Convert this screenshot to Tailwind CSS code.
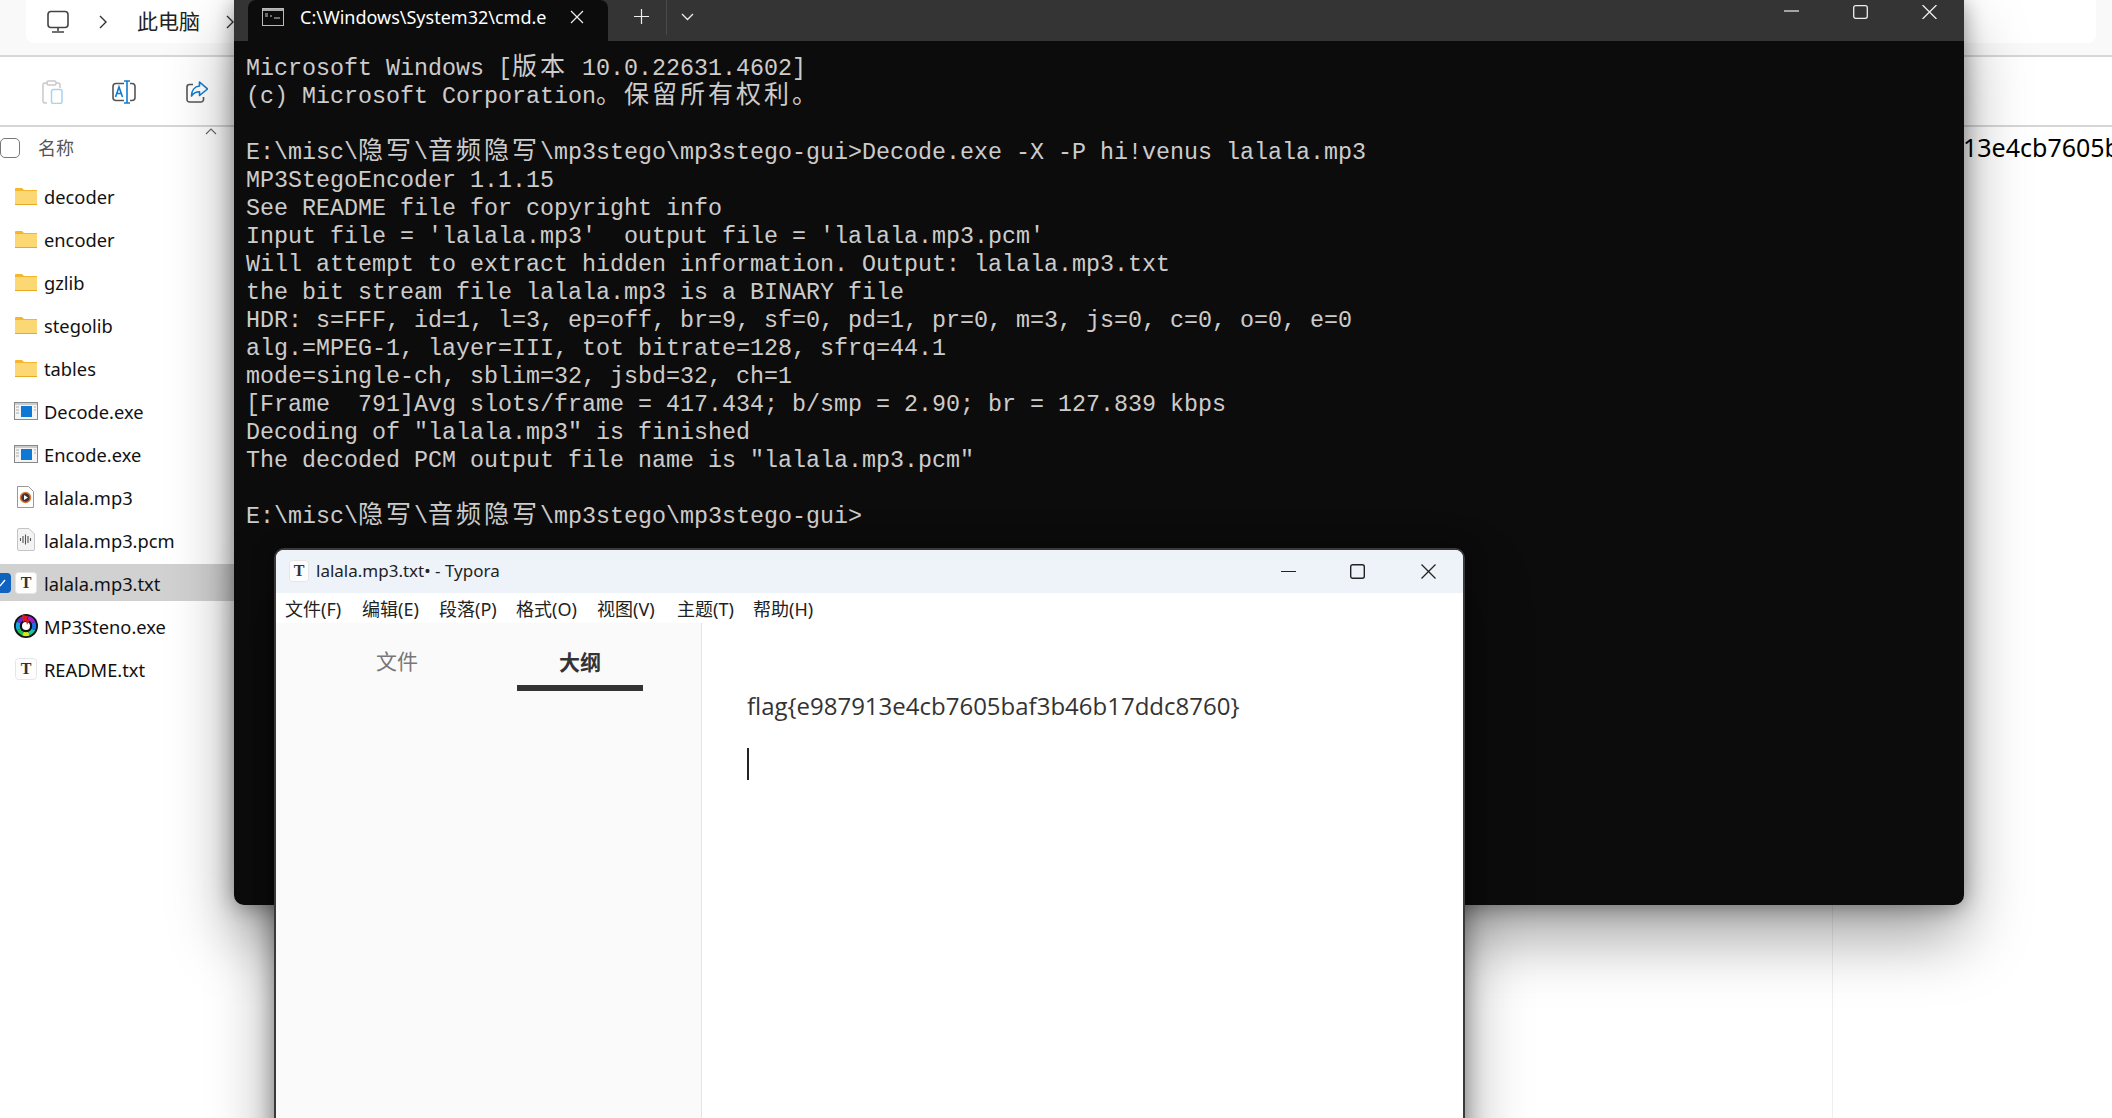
<!DOCTYPE html>
<html lang="zh">
<head>
<meta charset="utf-8">
<script src="https://cdn.jsdelivr.net/npm/@tailwindcss/browser@4"></script>
</head>
<body class="m-0">
<div class="relative w-[2112px] h-[1118px] overflow-hidden bg-white font-['Noto_Sans','Noto_Sans_CJK_SC',sans-serif] text-[#111]">

  <!-- Explorer behind -->
  <div class="flex flex-col w-full h-full">
    <div class="h-[55px] bg-[#f9f9f9]">
      <div class="ml-[26px] w-[2070px] h-[43px] bg-white rounded-b-[8px] flex items-center">
        <svg class="ml-[20px] w-[24px] h-[24px]" viewBox="0 0 24 24" fill="none" stroke="#444" stroke-width="1.6"><rect x="2" y="1.500" width="20" height="16" rx="3"/><path d="M12 18v3M6 22h12"/></svg>
        <svg class="ml-[27px] w-[12px] h-[16px]" viewBox="0 0 12 16" fill="none" stroke="#333" stroke-width="1.4"><path d="M3 2l6 6-6 6"/></svg>
        <span class="ml-[28px] text-[21px] text-[#222]">此电脑</span>
        <svg class="ml-[24px] w-[12px] h-[16px]" viewBox="0 0 12 16" fill="none" stroke="#333" stroke-width="1.4"><path d="M3 2l6 6-6 6"/></svg>
      </div>
    </div>
    <div class="h-[2px] bg-[#d6d6d6]"></div>
    <div class="h-[68px] flex items-center pt-[2px]">
      <svg class="ml-[42px] w-[21px] h-[24px]" viewBox="0 0 21 24" fill="none" stroke-width="1.5"><path d="M14 3h2a2 2 0 0 1 2 2v3M5 23H3a2 2 0 0 1-2-2V5a2 2 0 0 1 2-2h2" stroke="#c9c9c9"/><rect x="5" y="1" width="9" height="4" rx="1.500" stroke="#c9c9c9"/><rect x="9.500" y="9.500" width="10.500" height="14" rx="2" stroke="#a9d2ee"/></svg>
      <svg class="ml-[49px] w-[24px] h-[24px]" viewBox="0 0 24 24" fill="none" stroke-width="1.6"><path d="M12 3.500H4a3 3 0 0 0-3 3v11a3 3 0 0 0 3 3h8M18 3.500h2a3 3 0 0 1 3 3v11a3 3 0 0 1-3 3h-2" stroke="#555"/><path d="M12 1h6M12 23h6M15 1v22" stroke="#0f7ccf"/><path d="M3.500 17l3.500-10 3.500 10M4.800 13.500h4.500" stroke="#0f7ccf"/></svg>
      <svg class="ml-[50px] w-[22px] h-[22px]" viewBox="0 0 22 22" fill="none" stroke-width="1.6"><path d="M7 3.500H3.500a2.500 2.500 0 0 0-2.500 2.500v12.500a2.500 2.500 0 0 0 2.500 2.500H15a2.500 2.500 0 0 0 2.500-2.500V16" stroke="#555"/><path d="M13.500 1l8 7-8 6.500v-3.800c-4 0-6 1-8 4.300 0-5.500 3-9.500 8-10z" stroke="#0f7ccf" stroke-linejoin="round"/></svg>
    </div>
    <div class="h-[2px] bg-[#d6d6d6]"></div>

    <div class="relative flex-1 flex">
      <div class="w-[234px] shrink-0">
        <div class="relative h-[50px]">
          <svg class="absolute left-[205px] top-[0px] w-[12px] h-[8px]" viewBox="0 0 12 8" fill="none" stroke="#666" stroke-width="1.100"><path d="M1 7l5-5 5 5"/></svg>
          <div class="flex items-center pt-[11px]">
            <div class="w-[20px] h-[20px] rounded-[5px] border border-[#777]"></div>
            <span class="ml-[18px] text-[18px] leading-[20px] text-[#555]">名称</span>
          </div>
        </div>
        <ul class="flex flex-col gap-[6px] text-[18.300px] leading-[37px]">
          <li class="h-[37px] flex items-center pl-[15px]"><svg class="w-[22px] h-[18px]" viewBox="0 0 22 18"><path d="M0 2a1 1 0 0 1 1-1h6l2 2h13v4H0z" fill="#f5b62c"/><path d="M0 4h22v13a1 1 0 0 1-1 1H1a1 1 0 0 1-1-1z" fill="#fcd875"/><path d="M0 17h22v1H0z" fill="#eaa824"/></svg><span class="ml-[7px] translate-y-[1px]">decoder</span></li>
          <li class="h-[37px] flex items-center pl-[15px]"><svg class="w-[22px] h-[18px]" viewBox="0 0 22 18"><path d="M0 2a1 1 0 0 1 1-1h6l2 2h13v4H0z" fill="#f5b62c"/><path d="M0 4h22v13a1 1 0 0 1-1 1H1a1 1 0 0 1-1-1z" fill="#fcd875"/><path d="M0 17h22v1H0z" fill="#eaa824"/></svg><span class="ml-[7px] translate-y-[1px]">encoder</span></li>
          <li class="h-[37px] flex items-center pl-[15px]"><svg class="w-[22px] h-[18px]" viewBox="0 0 22 18"><path d="M0 2a1 1 0 0 1 1-1h6l2 2h13v4H0z" fill="#f5b62c"/><path d="M0 4h22v13a1 1 0 0 1-1 1H1a1 1 0 0 1-1-1z" fill="#fcd875"/><path d="M0 17h22v1H0z" fill="#eaa824"/></svg><span class="ml-[7px] translate-y-[1px]">gzlib</span></li>
          <li class="h-[37px] flex items-center pl-[15px]"><svg class="w-[22px] h-[18px]" viewBox="0 0 22 18"><path d="M0 2a1 1 0 0 1 1-1h6l2 2h13v4H0z" fill="#f5b62c"/><path d="M0 4h22v13a1 1 0 0 1-1 1H1a1 1 0 0 1-1-1z" fill="#fcd875"/><path d="M0 17h22v1H0z" fill="#eaa824"/></svg><span class="ml-[7px] translate-y-[1px]">stegolib</span></li>
          <li class="h-[37px] flex items-center pl-[15px]"><svg class="w-[22px] h-[18px]" viewBox="0 0 22 18"><path d="M0 2a1 1 0 0 1 1-1h6l2 2h13v4H0z" fill="#f5b62c"/><path d="M0 4h22v13a1 1 0 0 1-1 1H1a1 1 0 0 1-1-1z" fill="#fcd875"/><path d="M0 17h22v1H0z" fill="#eaa824"/></svg><span class="ml-[7px] translate-y-[1px]">tables</span></li>
          <li class="h-[37px] flex items-center pl-[14px]"><svg class="w-[24px] h-[18px]" viewBox="0 0 24 18"><rect x=".5" y=".5" width="23" height="17" fill="#f4f4f4" stroke="#888"/><rect x="1" y="1" width="22" height="2" fill="#ccc"/><rect x="7" y="4" width="11" height="11" fill="#0f78d4"/><path d="M2 5h3M2 8h3M2 11h3M20 5h2M20 8h2" stroke="#aaa"/></svg><span class="ml-[6px] translate-y-[1px]">Decode.exe</span></li>
          <li class="h-[37px] flex items-center pl-[14px]"><svg class="w-[24px] h-[18px]" viewBox="0 0 24 18"><rect x=".5" y=".5" width="23" height="17" fill="#f4f4f4" stroke="#888"/><rect x="1" y="1" width="22" height="2" fill="#ccc"/><rect x="7" y="4" width="11" height="11" fill="#0f78d4"/><path d="M2 5h3M2 8h3M2 11h3M20 5h2M20 8h2" stroke="#aaa"/></svg><span class="ml-[6px] translate-y-[1px]">Encode.exe</span></li>
          <li class="h-[37px] flex items-center pl-[17px]"><svg class="w-[17px] h-[22px]" viewBox="0 0 17 22"><path d="M.5.500h11l5 5v16H.5z" fill="#fff" stroke="#999"/><circle cx="8.500" cy="11.500" r="5" fill="#3a3340"/><circle cx="8.500" cy="11.500" r="5" fill="none" stroke="#e07a2f" stroke-width="1.500"/><path d="M7 9l4 2.500L7 14z" fill="#fff"/></svg><span class="ml-[10px] translate-y-[1px]">lalala.mp3</span></li>
          <li class="h-[37px] flex items-center pl-[17px]"><svg class="w-[18px] h-[23px]" viewBox="0 0 18 23"><path d="M2 .500h10l5.500 5.500v15a1.500 1.500 0 0 1-1.500 1.500H2A1.500 1.500 0 0 1 .5 21V2A1.500 1.500 0 0 1 2 .5z" fill="#f3f3f3" stroke="#c4c4c4"/><path d="M3.500 10v3M6 8v7M8.500 6.500v10M11 8v7M13.500 10v3" stroke="#555" stroke-width="1.100"/></svg><span class="ml-[9px] translate-y-[1px]">lalala.mp3.pcm</span></li>
          <li class="relative h-[37px] flex items-center pl-[15px] bg-[#d1d1d1]">
            <div class="absolute left-0 top-[9px] w-[11px] h-[20px] rounded-r-[4px] bg-[#0f62c0]"><svg class="w-[11px] h-[20px]" viewBox="0 0 11 20" fill="none" stroke="#fff" stroke-width="1.300"><path d="M0 13l5-6"/></svg></div>
            <svg class="w-[22px] h-[22px]" viewBox="0 0 22 22"><rect x=".5" y=".5" width="21" height="21" rx="3" fill="#fdfdfd" stroke="#e6e6e6"/><text x="11" y="16" text-anchor="middle" font-family="Liberation Serif, serif" font-weight="700" font-size="16" fill="#333">T</text></svg>
            <span class="ml-[7px] translate-y-[1px]">lalala.mp3.txt</span>
          </li>
          <li class="h-[37px] flex items-center pl-[14px]"><svg class="w-[24px] h-[24px]" viewBox="0 0 24 24" fill="none"><circle cx="12" cy="12" r="12" fill="#111"/><path d="M4.600 15.500A8.200 8.200 0 0 0 9 19.600" stroke="#16c84a" stroke-width="4"/><path d="M9 19.600a8.200 8.200 0 0 0 6 0" stroke="#d8e81c" stroke-width="4"/><path d="M15 19.600a8.200 8.200 0 0 0 4.400-4.100" stroke="#14c8a0" stroke-width="4"/><path d="M19.400 15.500a8.200 8.200 0 0 0 0-7" stroke="#1670e8" stroke-width="4"/><path d="M19.400 8.500A8.200 8.200 0 0 0 14 4" stroke="#a020d0" stroke-width="4"/><path d="M10 4a8.200 8.200 0 0 0-5.400 4.500" stroke="#6a28d8" stroke-width="4"/><path d="M4.600 8.500a8.200 8.200 0 0 0 0 7" stroke="#14a8e0" stroke-width="4"/><circle cx="12" cy="12" r="6" fill="#111"/><circle cx="12" cy="12" r="4" fill="#fff"/><path d="M8 1l6 1-1 4 3-1-3 6-1-4-3 1z" fill="#e01818"/></svg><span class="ml-[6px] translate-y-[1px]">MP3Steno.exe</span></li>
          <li class="h-[37px] flex items-center pl-[15px]"><svg class="w-[22px] h-[22px]" viewBox="0 0 22 22"><rect x=".5" y=".5" width="21" height="21" rx="3" fill="#fdfdfd" stroke="#e6e6e6"/><text x="11" y="16" text-anchor="middle" font-family="Liberation Serif, serif" font-weight="700" font-size="16" fill="#333">T</text></svg><span class="ml-[7px] translate-y-[1px]">README.txt</span></li>
        </ul>
      </div>
      <div class="flex-1 overflow-hidden pl-[1729px] pt-[1px]">
        <div class="whitespace-nowrap text-[25px] leading-[38px] text-black">13e4cb7605baf3b46b17ddc8760}</div>
      </div>
      <div class="absolute left-[1832px] top-0 bottom-0 w-px bg-[#efefef]"></div>
    </div>
  </div>

  <!-- cmd window -->
  <div class="absolute left-[234px] top-0 w-[1730px] h-[905px] bg-[#0c0c0c] rounded-b-[10px] shadow-[0_32px_64px_rgba(0,0,0,0.37),0_2px_21px_rgba(0,0,0,0.37)] flex flex-col">
    <div class="h-[41px] shrink-0 bg-[#343434] flex items-stretch">
      <div class="ml-[14px] w-[360px] h-[41px] bg-[#0c0c0c] rounded-t-[8px] flex items-center">
        <svg class="ml-[14px] w-[22px] h-[18px] -mt-[7px]" viewBox="0 0 22 18"><rect x=".5" y=".5" width="21" height="17" fill="#0c0c0c" stroke="#bbb"/><rect x="1" y="1" width="20" height="2" fill="#aaa"/><path d="M3 6h3M3 8h3M8 8h2M12 10h6" stroke="#ccc"/></svg>
        <span class="ml-[16px] w-[246px] overflow-hidden whitespace-nowrap text-[18px] leading-[24px] -mt-[8px] text-white">C:\Windows\System32\cmd.exe</span>
        <svg class="ml-[24px] w-[14px] h-[14px] -mt-[8px]" viewBox="0 0 14 14" fill="none" stroke="#eee" stroke-width="1.200"><path d="M1 1l12 12M13 1L1 13"/></svg>
      </div>
      <svg class="ml-[26px] mt-[9px] w-[15px] h-[15px]" viewBox="0 0 15 15" fill="none" stroke="#eee" stroke-width="1.200"><path d="M7.500 0v15M0 7.500h15"/></svg>
      <div class="ml-[17px] w-px h-[35px] bg-[#4a4a4a]"></div>
      <svg class="ml-[14px] mt-[13px] w-[13px] h-[8px]" viewBox="0 0 13 8" fill="none" stroke="#eee" stroke-width="1.300"><path d="M1 1l5.500 5.500L12 1"/></svg>
      <div class="flex-1"></div>
      <div class="flex pt-[5px]">
        <svg class="w-[15px] h-[14px]" viewBox="0 0 15 14" fill="none" stroke="#eee" stroke-width="1.200"><path d="M0 6h15"/></svg>
        <svg class="ml-[54px] w-[15px] h-[14px]" viewBox="0 0 15 14" fill="none" stroke="#eee" stroke-width="1.300"><rect x=".7" y=".7" width="13.600" height="12.600" rx="2"/></svg>
        <svg class="ml-[54px] mr-[27px] w-[15px] h-[14px]" viewBox="0 0 15 14" fill="none" stroke="#eee" stroke-width="1.300"><path d="M.5 0l14 14M14.500 0L.5 14"/></svg>
      </div>
    </div>
    <div class="pl-[12px] pt-[14px] font-['Liberation_Mono','Noto_Sans_CJK_SC',monospace] text-[23.330px] leading-[28px] text-[#cccccc]">
      <div class="h-[28px] whitespace-pre">Microsoft Windows [<span class="text-[25px] tracking-[3px]">版本</span> 10.0.22631.4602]</div>
      <div class="h-[28px] whitespace-pre">(c) Microsoft Corporation<span class="text-[25px] tracking-[3px]">。保留所有权利。</span></div>
      <div class="h-[28px]"></div>
      <div class="h-[28px] whitespace-pre">E:\misc\<span class="text-[25px] tracking-[3px]">隐写</span>\<span class="text-[25px] tracking-[3px]">音频隐写</span>\mp3stego\mp3stego-gui&gt;Decode.exe -X -P hi!venus lalala.mp3</div>
      <div class="h-[28px] whitespace-pre">MP3StegoEncoder 1.1.15</div>
      <div class="h-[28px] whitespace-pre">See README file for copyright info</div>
      <div class="h-[28px] whitespace-pre">Input file = 'lalala.mp3'  output file = 'lalala.mp3.pcm'</div>
      <div class="h-[28px] whitespace-pre">Will attempt to extract hidden information. Output: lalala.mp3.txt</div>
      <div class="h-[28px] whitespace-pre">the bit stream file lalala.mp3 is a BINARY file</div>
      <div class="h-[28px] whitespace-pre">HDR: s=FFF, id=1, l=3, ep=off, br=9, sf=0, pd=1, pr=0, m=3, js=0, c=0, o=0, e=0</div>
      <div class="h-[28px] whitespace-pre">alg.=MPEG-1, layer=III, tot bitrate=128, sfrq=44.1</div>
      <div class="h-[28px] whitespace-pre">mode=single-ch, sblim=32, jsbd=32, ch=1</div>
      <div class="h-[28px] whitespace-pre">[Frame  791]Avg slots/frame = 417.434; b/smp = 2.90; br = 127.839 kbps</div>
      <div class="h-[28px] whitespace-pre">Decoding of "lalala.mp3" is finished</div>
      <div class="h-[28px] whitespace-pre">The decoded PCM output file name is "lalala.mp3.pcm"</div>
      <div class="h-[28px]"></div>
      <div class="h-[28px] whitespace-pre">E:\misc\<span class="text-[25px] tracking-[3px]">隐写</span>\<span class="text-[25px] tracking-[3px]">音频隐写</span>\mp3stego\mp3stego-gui&gt;</div>
    </div>
  </div>

  <!-- Typora window -->
  <div class="absolute left-[274px] top-[548px] w-[1191px] h-[600px] bg-white rounded-t-[10px] border-2 border-[#3a3a3a] shadow-[0_32px_64px_rgba(0,0,0,0.37),0_2px_21px_rgba(0,0,0,0.37)] flex flex-col overflow-hidden">
    <div class="h-[43px] shrink-0 bg-[#eef2f9] flex items-center pb-[1px]">
      <svg class="ml-[13px] w-[20px] h-[22px]" viewBox="0 0 20 22"><rect x=".5" y=".5" width="19" height="21" rx="3" fill="#fdfdfd" stroke="#e6e6e6"/><text x="10" y="16" text-anchor="middle" font-family="Liberation Serif, serif" font-weight="700" font-size="16" fill="#333">T</text></svg>
      <span class="ml-[7px] text-[17px] text-[#222]">lalala.mp3.txt• - Typora</span>
      <div class="flex-1"></div>
      <svg class="w-[15px] h-[15px]" viewBox="0 0 15 15" fill="none" stroke="#222" stroke-width="1.200"><path d="M0 7.500h15"/></svg>
      <svg class="ml-[54px] w-[15px] h-[15px]" viewBox="0 0 15 15" fill="none" stroke="#222" stroke-width="1.400"><rect x=".7" y=".7" width="13.600" height="13.600" rx="2"/></svg>
      <svg class="ml-[56px] mr-[27px] w-[15px] h-[15px]" viewBox="0 0 15 15" fill="none" stroke="#222" stroke-width="1.300"><path d="M.5.500l14 14M14.500.500l-14 14"/></svg>
    </div>
    <div class="h-[30px] shrink-0 flex items-center pl-[9px] pt-[2px] text-[18px] text-[#222] bg-white">
      <span class="w-[77px]">文件(F)</span><span class="w-[77px]">编辑(E)</span><span class="w-[77px]">段落(P)</span><span class="w-[81px]">格式(O)</span><span class="w-[80px]">视图(V)</span><span class="w-[76px]">主题(T)</span><span>帮助(H)</span>
    </div>
    <div class="flex-1 flex">
      <div class="w-[426px] shrink-0 bg-[#fafafa] border-r border-[#e4e4e4] flex items-start">
        <div class="ml-[100px] w-[42px] mt-[23px] text-center text-[21px] leading-[30px] whitespace-nowrap text-[#777]">文件</div>
        <div class="ml-[99px] w-[126px] mt-[24px] flex flex-col items-center">
          <span class="text-[21px] leading-[30px] font-bold text-[#333] whitespace-nowrap">大纲</span>
          <span class="mt-[8px] w-[126px] h-[6px] bg-[#333]"></span>
        </div>
      </div>
      <div class="flex-1 pl-[45px] pt-[65px] font-['Open_Sans','Noto_Sans',sans-serif] text-[24px] leading-[36px] text-[#333]">
        <div>flag{e987913e4cb7605baf3b46b17ddc8760}</div>
        <div class="mt-[24px] w-[2px] h-[32px] bg-[#222]"></div>
      </div>
    </div>
  </div>
</div>
</body>
</html>
